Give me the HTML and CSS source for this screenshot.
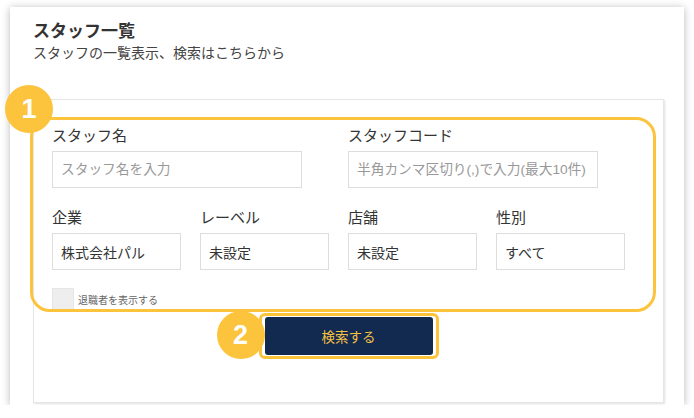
FILE: index.html
```html
<!DOCTYPE html>
<html lang="ja">
<head>
  <meta charset="UTF-8" />
  <title>スタッフ一覧</title>
  <link rel="stylesheet" href="styles.css">
</head>
<body>
  <div class="page">
    <div class="head">
      <h1>スタッフ一覧</h1>
      <p>スタッフの一覧表示、検索はこちらから</p>
    </div>

    <div class="card">
      <div class="mark-box"></div>
      <div class="badge badge-one">1</div>

      <div class="fields">
        <div class="field wide">
          <label>スタッフ名</label>
          <input type="text" class="long" placeholder="スタッフ名を入力" />
        </div>
        <div class="field wide">
          <label>スタッフコード</label>
          <input type="text" class="long" placeholder="半角カンマ区切り(,)で入力(最大10件)" />
        </div>
        <div class="field">
          <label>企業</label>
          <input type="text" value="株式会社パル" />
        </div>
        <div class="field">
          <label>レーベル</label>
          <input type="text" value="未設定" />
        </div>
        <div class="field">
          <label>店舗</label>
          <input type="text" value="未設定" />
        </div>
        <div class="field">
          <label>性別</label>
          <input type="text" value="すべて" />
        </div>
      </div>

      <div class="check">
        <span class="box"></span>
        <span>退職者を表示する</span>
      </div>

      <div class="actions">
        <span class="btn-ring">
          <span class="badge badge-two">2</span>
          <button>検索する</button>
        </span>
      </div>
    </div>
  </div>
</body>
</html>
```

FILE: styles.css
```css
body {
  margin: 0;
  background-color: #ffffff;
  font-family: "Liberation Sans", "Noto Sans CJK JP", sans-serif;
  color: #333;
}
.page {
  margin: 7px 10px 0;
  height: 398px;
  box-sizing: border-box;
  padding: 14px 20px 0 23px;
  background: #fff;
  box-shadow: 0 1px 8px rgba(0,0,0,0.28);
}
.head h1 {
  margin: 0;
  font-size: 17px;
  line-height: 22px;
  font-weight: bold;
  color: #333;
}
.head p {
  margin: 0;
  font-size: 14px;
  line-height: 20px;
  color: #444;
}
.card {
  position: relative;
  margin-top: 36px;
  height: 304px;
  box-sizing: border-box;
  padding: 26px 18px 0;
  border: 1px solid #e6e6e6;
  box-shadow: 1px 1px 2px rgba(0,0,0,0.12);
}
.fields {
  display: grid;
  grid-template-columns: repeat(4, 129px);
  column-gap: 19px;
  row-gap: 20px;
}
.field.wide {
  grid-column: span 2;
}
.field label {
  display: block;
  font-size: 15px;
  line-height: 20px;
  color: #333;
  margin-bottom: 5px;
}
.field input {
  display: block;
  width: 129px;
  height: 37px;
  box-sizing: border-box;
  margin: 0;
  padding: 0 8px;
  border: 1px solid #ddd;
  border-radius: 0;
  font-family: inherit;
  font-size: 14px;
  color: #333;
  background: #fff;
}
.field input.long {
  width: 250px;
  padding: 0 6px 0 8px;
  font-size: 13.7px;
}
.field input::placeholder {
  color: #999;
}
.check {
  display: flex;
  align-items: center;
  gap: 4px;
  margin-top: 18px;
  font-size: 10px;
  color: #666;
}
.check .box {
  width: 22px;
  height: 22px;
  box-sizing: border-box;
  background: #eee;
  border: 1px solid #e6e6e6;
}
.actions {
  margin-top: 3px;
  text-align: center;
}
.btn-ring {
  position: relative;
  display: inline-block;
  padding: 1px 3px;
  border: 3px solid #fcc33d;
  border-radius: 6px;
  line-height: 0;
}
.btn-ring button {
  width: 168px;
  height: 38px;
  border: 0;
  border-radius: 3px;
  background: #132a50;
  color: #f4c143;
  font-family: inherit;
  font-size: 13.5px;
}
.mark-box {
  position: absolute;
  left: -4px;
  top: 17px;
  width: 626px;
  height: 195px;
  box-sizing: border-box;
  border: 3px solid #fcc33d;
  border-radius: 20px;
  pointer-events: none;
}
.badge {
  position: absolute;
  width: 48px;
  height: 48px;
  border-radius: 50%;
  background: #fcc33d;
  color: #fff;
  font-family: "Liberation Sans", Arial, sans-serif;
  font-weight: bold;
  font-size: 27px;
  line-height: 48px;
  text-align: center;
}
.badge-one {
  left: -29px;
  top: -15px;
}
.badge-two {
  left: -45px;
  top: -5px;
}
```
